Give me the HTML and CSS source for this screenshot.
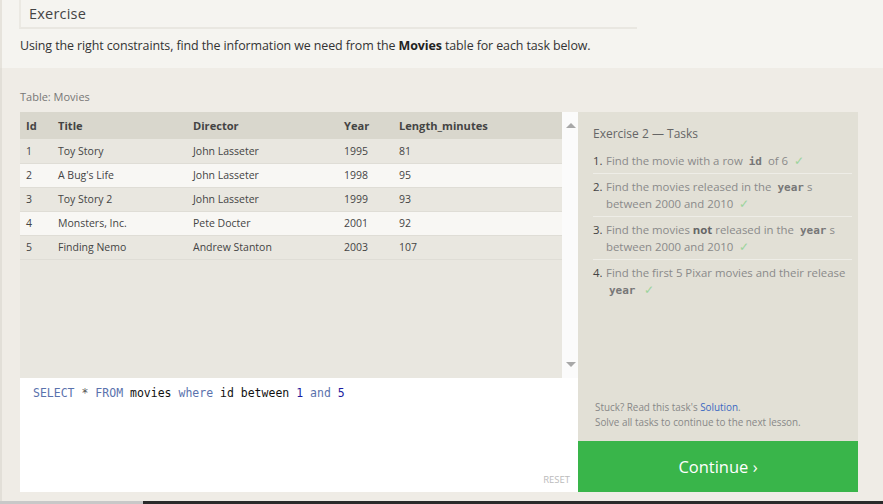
FILE: index.html
```html
<!DOCTYPE html>
<html>
<head>
<meta charset="utf-8">
<link rel="stylesheet" href="styles.css">
</head>
<body>
<div class="top">
  <div class="heading">Exercise</div>
  <p class="desc">Using the right constraints, find the information we need from the <b>Movies</b> table for each task below.</p>
</div>
<div class="main">
  <div class="label">Table: Movies</div>
  <div class="grid">
    <div class="tablewrap">
      <div class="table">
        <table>
          <colgroup><col class="w1"><col class="w2"><col class="w3"><col class="w4"><col class="w5"></colgroup>
          <thead>
            <tr><th>Id</th><th>Title</th><th>Director</th><th>Year</th><th>Length_minutes</th></tr>
          </thead>
          <tbody>
            <tr><td>1</td><td>Toy Story</td><td>John Lasseter</td><td>1995</td><td>81</td></tr>
            <tr class="alt"><td>2</td><td>A Bug's Life</td><td>John Lasseter</td><td>1998</td><td>95</td></tr>
            <tr><td>3</td><td>Toy Story 2</td><td>John Lasseter</td><td>1999</td><td>93</td></tr>
            <tr class="alt"><td>4</td><td>Monsters, Inc.</td><td>Pete Docter</td><td>2001</td><td>92</td></tr>
            <tr><td>5</td><td>Finding Nemo</td><td>Andrew Stanton</td><td>2003</td><td>107</td></tr>
          </tbody>
        </table>
      </div>
      <div class="scrollbar">
        <svg width="10" height="6" viewBox="0 0 10 6"><path d="M0 6 L5 1 L10 6 Z" fill="#a8a8a8"/></svg>
        <svg width="10" height="6" viewBox="0 0 10 6"><path d="M0 0 L5 5 L10 0 Z" fill="#a8a8a8"/></svg>
      </div>
    </div>
    <div class="tasks">
      <div class="tasks-title">Exercise 2 — Tasks</div>
      <ol class="tasklist">
        <li><span class="num">1.</span><span class="txt">Find the movie with a row <code>id</code> of 6 <span class="chk">✓</span></span></li>
        <li><span class="num">2.</span><span class="txt">Find the movies released in the <code>year</code>s between 2000 and 2010 <span class="chk">✓</span></span></li>
        <li><span class="num">3.</span><span class="txt">Find the movies <b>not</b> released in the <code>year</code>s between 2000 and 2010 <span class="chk">✓</span></span></li>
        <li><span class="num">4.</span><span class="txt">Find the first 5 Pixar movies and their release <code>year</code> <span class="chk">✓</span></span></li>
      </ol>
      <div class="stuck">
        <div>Stuck? Read this task's <a>Solution</a>.</div>
        <div>Solve all tasks to continue to the next lesson.</div>
      </div>
    </div>
    <div class="editor">
      <div class="code"><span class="kw">SELECT</span> <span class="op">*</span> <span class="kw">FROM</span> movies <span class="kw">where</span> id between <span class="n">1</span> <span class="kw">and</span> <span class="n">5</span></div>
      <div class="reset">RESET</div>
    </div>
    <div class="continue">Continue ›</div>
  </div>
</div>
<div class="bottombar"><div class="bb-light"></div><div class="bb-dark"></div></div>
</body>
</html>
```
FILE: styles.css
```css
* { box-sizing: border-box; }
html, body { margin: 0; padding: 0; }
body {
  width: 883px;
  height: 504px;
  overflow: hidden;
  background: #efece6;
  font-family: "Open Sans", "Noto Sans", sans-serif;
  color: #444;
  display: flex;
  flex-direction: column;
}
.top {
  background: #f5f4f0;
  height: 68px;
  padding: 0 20px;
  border-left: 2px solid #e6e3dc;
  flex: none;
}
.heading {
  margin-left: -3px;
  width: 618px;
  height: 29px;
  border-left: 2px solid #ebe9e3;
  border-bottom: 2px solid #e9e7e1;
  padding-left: 8px;
  font-size: 14.5px;
  line-height: 27px;
  color: #444;
  letter-spacing: 0.2px;
}
.desc {
  margin: 8px 0 0 -2px;
  font-size: 12.45px;
  line-height: 17px;
  color: #333;
  letter-spacing: -0.1px;
}
.desc b { font-weight: 700; color: #222; }
.main {
  flex: none;
  height: 433px;
  padding: 20px 0 0 20px;
  border-left: 2px solid #e2dfd8;
}
.label {
  margin-left: -2px;
  font-size: 11px;
  color: #777;
  height: 24px;
  line-height: 18px;
}
.grid {
  margin-left: -2px;
  display: grid;
  grid-template-columns: 558px 280px;
  grid-template-rows: 266px 63px 51px;
}
.tablewrap {
  grid-column: 1;
  grid-row: 1;
  display: flex;
  background: #e9e7e0;
}
.table { width: 542px; }
table {
  width: 542px;
  table-layout: fixed;
  border-collapse: collapse;
  font-size: 10.5px;
  color: #444;
}
col.w1 { width: 38px; }
col.w2 { width: 135px; }
col.w3 { width: 151px; }
col.w4 { width: 55px; }
col.w5 { width: 163px; }
th {
  background: #d9d7cd;
  height: 27px;
  text-align: left;
  font-weight: 700;
  font-size: 11.1px;
  color: #444;
  padding: 0;
  white-space: nowrap;
}
td { height: 24px; padding: 0; border-bottom: 1px solid #dfddd6; white-space: nowrap; }
tbody tr { background: #e9e7e0; }
tbody tr.alt { background: #f8f7f4; }
th:first-child, td:first-child { padding-left: 6px; }
.scrollbar {
  width: 16px;
  background: #fbfbfb;
  display: flex;
  flex-direction: column;
  justify-content: space-between;
  align-items: center;
  padding: 10px 0 10px 2px;
}
.tasks {
  grid-column: 2;
  grid-row: 1 / 3;
  background: #e2e0d6;
  padding: 14px 6px 0 15px;
  display: flex;
  flex-direction: column;
}
.tasks-title {
  font-size: 12px;
  color: #666;
  line-height: 16px;
}
.tasklist {
  list-style: none;
  margin: 10px 0 0 0;
  padding: 0;
}
.tasklist li {
  display: flex;
  font-size: 11.4px;
  color: #8a8a8a;
  line-height: 17px;
  padding: 0 0 4px 0;
  margin-bottom: 4px;
  border-bottom: 1px solid #eeede7;
}
.tasklist li:last-child { border-bottom: none; }
.num { color: #444; width: 13px; flex: none; font-size: 11.4px; }
.txt { width: 250px; }
code {
  font-family: "DejaVu Sans Mono", monospace;
  font-weight: 700;
  color: #777;
  font-size: 11px;
  line-height: 1;
  margin: 0 3px;
}
.txt b { color: #666; }
.chk { color: #9cd49c; margin-left: 3px; font-size: 12px; line-height: 1; }
.stuck {
  margin-top: auto;
  font-size: 9.9px;
  color: #888;
  line-height: 15px;
  padding-bottom: 11px;
  padding-left: 2px;
}
.stuck a { color: #3a68c2; }
.editor {
  grid-column: 1;
  grid-row: 2 / 4;
  background: #fff;
  position: relative;
  padding: 8px 0 0 13px;
}
.code {
  font-family: "DejaVu Sans Mono", monospace;
  font-size: 11.5px;
  color: #111;
  white-space: pre;
}
.kw { color: #5a72ad; }
.op { color: #555; }
.n { color: #1c1ca0; }
.reset {
  position: absolute;
  right: 8px;
  bottom: 6px;
  font-size: 9.5px;
  color: #bbb;
}
.continue {
  grid-column: 2;
  grid-row: 3;
  background: #39b54a;
  color: #fff;
  font-size: 16.5px;
  display: flex;
  align-items: center;
  justify-content: center;
}
.bottombar {
  height: 3px;
  display: flex;
  margin-top: auto;
}
.bb-light { width: 143px; background: #c8c8c8; }
.bb-dark { flex: 1; background: #2a2a2a; }
```
